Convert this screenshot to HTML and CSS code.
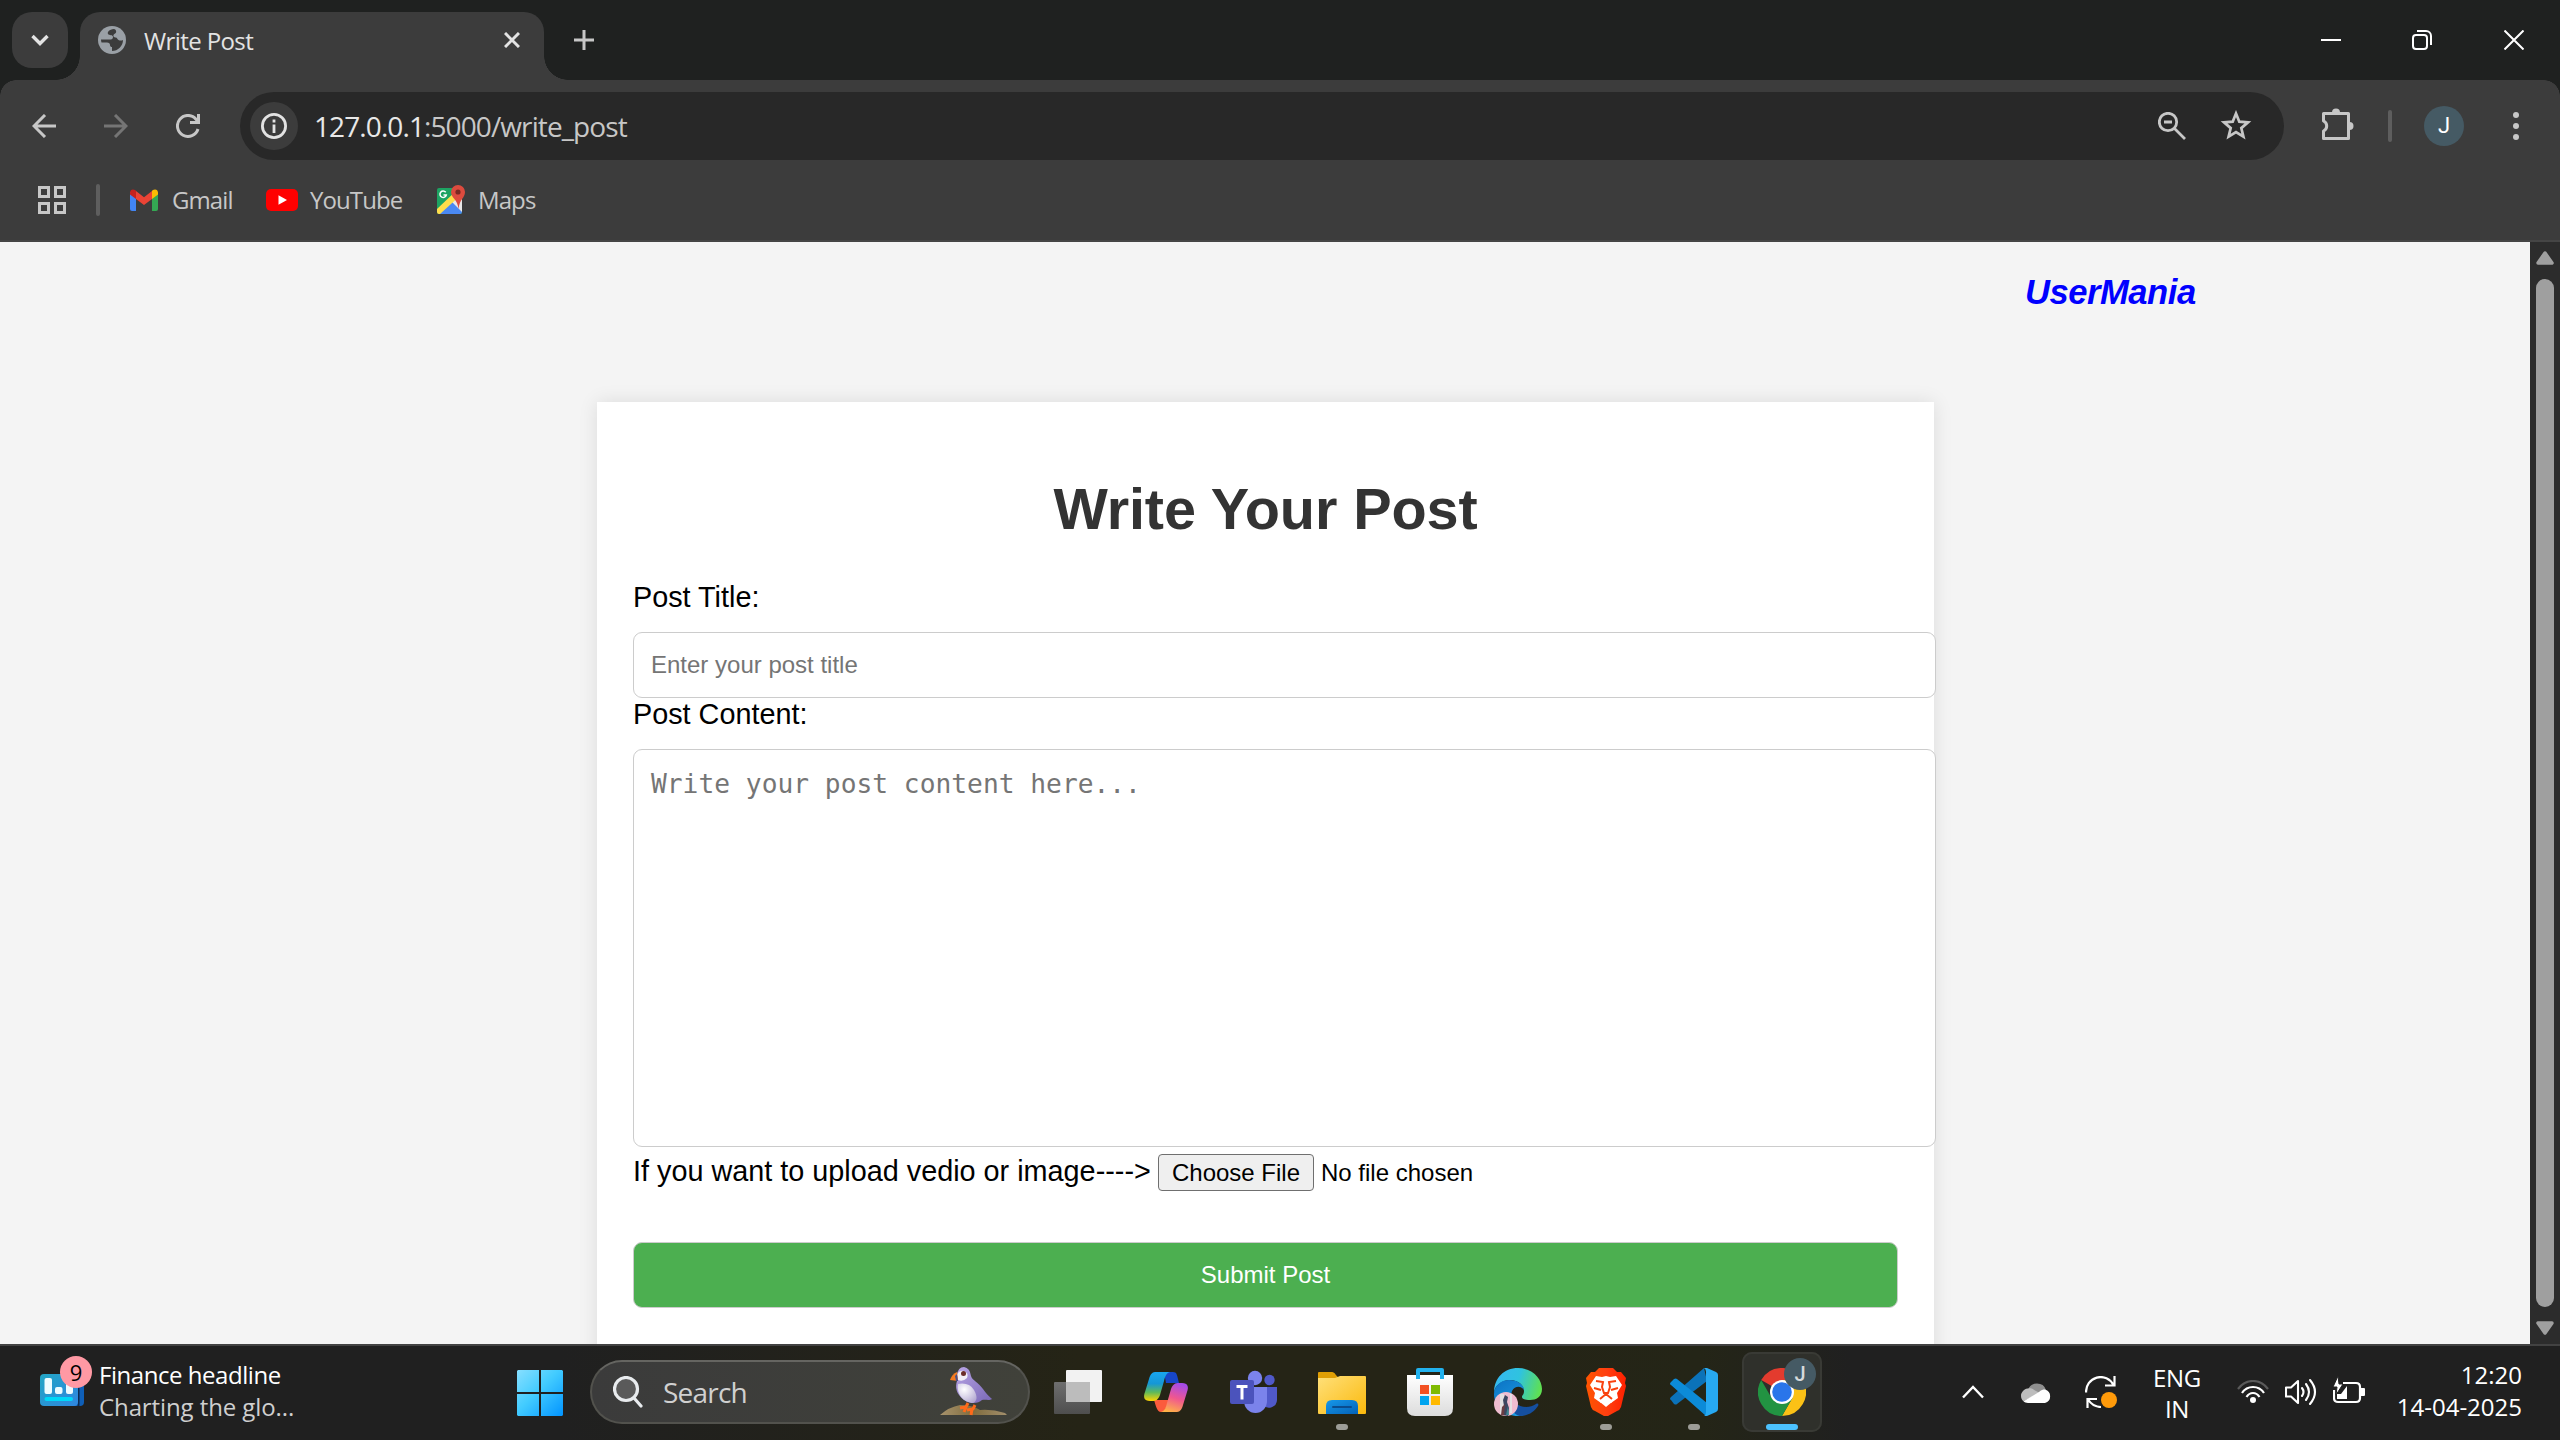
FILE: index.html
```html
<!DOCTYPE html>
<html lang="en">
<head>
<meta charset="utf-8">
<title>Write Post</title>
<link rel="stylesheet" href="styles.css">
</head>
<body>
<div class="screen">
  <header class="tabstrip">
    <button class="tab-search" aria-label="Search tabs"><svg width="20" height="12" viewBox="0 0 20 12"><path d="M2.500 2l7.500 7.500L17.500 2" fill="none" stroke="#e3e3e3" stroke-width="3.400"/></svg></button>
    <div class="tab">
      <svg class="globe" width="28" height="28" viewBox="0 0 28 28"><circle cx="14" cy="14" r="14" fill="#9aa0a6"/><path d="M16 3c-5 .5-7 3-6 5 1 1.500 5 .5 5 3 0 2-1.500 2.500-3 2.500H3c0 1 .2 2 .5 3H9c2 0 3 1 3 2.500s1 2 2 2v4c6 0 11-5 11-11-1 .5-3 1-4.500 0-1.500-1-1-2.500-3-2.500-1.500 0-2.500-1-2-2.500.5-1.500 2-1 2.500-2.500C18.500 5 18 3.500 16 3z" fill="#3c3c3c"/></svg>
      <span class="tab-title">Write Post</span>
      <svg class="tab-close" width="16" height="16" viewBox="0 0 16 16"><path d="M1 1l14 14M15 1L1 15" stroke="#e3e3e3" stroke-width="3"/></svg>
    </div>
    <svg class="new-tab" width="20" height="20" viewBox="0 0 20 20"><path d="M10 0v20M0 10h20" stroke="#c7c7c7" stroke-width="3"/></svg>
    <div class="window-buttons">
      <svg width="20" height="20" viewBox="0 0 20 20"><path d="M0 10h20" stroke="#fff" stroke-width="2"/></svg>
      <svg width="20" height="20" viewBox="0 0 20 20" fill="none" stroke="#fff" stroke-width="2"><rect x="1" y="5" width="14" height="14" rx="3"/><path d="M5 1h9a5 5 0 0 1 5 5v9"/></svg>
      <svg width="20" height="20" viewBox="0 0 20 20"><path d="M.5.500l19 19M19.500.500l-19 19" stroke="#fff" stroke-width="2"/></svg>
    </div>
  </header>

  <div class="toolbar">
    <nav class="nav-buttons">
      <svg width="24" height="24" viewBox="0 0 24 24" fill="none" stroke="#c7c7c7" stroke-width="3"><path d="M24 12H2M13 1L2 12l11 11"/></svg>
      <svg width="24" height="24" viewBox="0 0 24 24" fill="none" stroke="#757575" stroke-width="3"><path d="M0 12h22M11 1l11 11-11 11"/></svg>
      <svg width="24" height="24" viewBox="0 0 24 24" fill="none" stroke="#c7c7c7" stroke-width="3"><path d="M22 15A10.500 10.500 0 1 1 20 5.200l2.500 3M22.500 0v8.500H14"/></svg>
    </nav>
    <div class="omnibox">
      <span class="site-info"><svg width="26" height="26" viewBox="0 0 26 26"><circle cx="13" cy="13" r="11.600" fill="none" stroke="#e3e3e3" stroke-width="2.800"/><path d="M13 11.500V20M13 6.500v3" stroke="#e3e3e3" stroke-width="2.800"/></svg></span>
      <span class="url"><b>127.0.0.1</b>:5000/write_post</span>
      <svg class="zoom-icon" width="28" height="28" viewBox="0 0 28 28" fill="none" stroke="#c7c7c7" stroke-width="2.800"><circle cx="10" cy="10" r="8.700"/><path d="M16.500 16.500L27 27M6 10h8"/></svg>
      <svg class="star" width="32" height="30" viewBox="0 0 32 30"><path d="M16 3.500l3.300 8.200 8.700.7-6.700 5.700 2.100 8.500-7.400-4.600-7.400 4.600 2.100-8.500L4 12.400l8.700-.7z" fill="none" stroke="#c7c7c7" stroke-width="2.700"/></svg>
    </div>
    <svg class="puzzle" width="32" height="32" viewBox="0 0 32 32"><path d="M3.500 5.500h23v25h-25V23a5.500 5.500 0 0 0 0-10V5.500z" fill="none" stroke="#c7c7c7" stroke-width="3" stroke-linejoin="round"/><path d="M10 4.500a4 4 0 0 1 8 0zM27.500 14a4 4 0 0 1 0 8z" fill="#c7c7c7"/></svg>
    <i class="divider"></i>
    <span class="avatar">J</span>
    <svg class="menu" width="6" height="28" viewBox="0 0 6 28" fill="#c7c7c7"><circle cx="3" cy="3" r="3"/><circle cx="3" cy="14" r="3"/><circle cx="3" cy="25" r="3"/></svg>
  </div>

  <div class="bookmarks">
    <svg class="apps" width="28" height="28" viewBox="0 0 28 28" fill="none" stroke="#c7c7c7" stroke-width="3"><path d="M1.500 1.500h9v9h-9zM17.500 1.500h9v9h-9zM1.500 17.500h9v9h-9zM17.500 17.500h9v9h-9z"/></svg>
    <i class="divider"></i>
    <a class="bookmark gmail"><svg width="28" height="22" viewBox="0 0 28 22"><path d="M0 3h6v19H2a2 2 0 0 1-2-2z" fill="#4285f4"/><path d="M22 3h6v17a2 2 0 0 1-2 2h-4z" fill="#34a853"/><path d="M6 2l8 6.200L22 2v8l-8 6-8-6z" fill="#ea4335"/><path d="M0 4c0-4 3.500-4.500 6-2.200V10L0 5.500z" fill="#c5221f"/><path d="M28 4c0-4-3.500-4.500-6-2.200V10l6-4.500z" fill="#fbbc04"/></svg><span>Gmail</span></a>
    <a class="bookmark youtube"><svg width="32" height="22" viewBox="0 0 32 22"><rect width="32" height="22" rx="5" fill="#f00"/><path d="M12.500 6.200v9.600l8.500-4.800z" fill="#fff"/></svg><span>YouTube</span></a>
    <a class="bookmark maps"><svg width="30" height="30" viewBox="0 0 30 30"><rect x="1" y="3" width="25" height="26" rx="2" fill="#1da362"/><path d="M1 26L15 13l11 12v2a2 2 0 0 1-2 2H3z" fill="#4a89f3"/><path d="M26 10v17L14 15z" fill="#e8e8e8"/><path d="M1 24L22 4l4 1v4L4 29H3a2 2 0 0 1-2-2z" fill="#ffdd4b"/><path d="M22 0a7 7 0 0 1 7 7c0 6-5.500 7-6.500 17C21.500 14 15 13 15 7a7 7 0 0 1 7-7z" fill="#dc4b3e"/><circle cx="22" cy="7" r="2.600" fill="#7a2822"/><path d="M9.700 7.300A3.200 3.200 0 1 0 10.300 10H7.500" fill="none" stroke="#fff" stroke-width="1.500"/></svg><span>Maps</span></a>
  </div>

  <main class="viewport">
    <div class="page">
      <a class="brand">UserMania</a>
      <form class="card">
        <h1>Write Your Post</h1>
        <label class="first" for="title">Post Title:</label>
        <input class="field" id="title" type="text" placeholder="Enter your post title">
        <label for="content">Post Content:</label>
        <textarea class="field content" id="content" placeholder="Write your post content here..."></textarea>
        <div class="upload"><span class="upload-label">If you want to upload vedio or image----&gt;</span><span class="choose">Choose File</span><span class="no-file">No file chosen</span></div>
        <button class="submit" type="button">Submit Post</button>
      </form>
    </div>
    <div class="scrollbar">
      <svg width="18" height="14" viewBox="0 0 18 14"><path d="M9 2L16 12H2z" fill="#9f9f9f" stroke="#9f9f9f" stroke-width="3.500" stroke-linejoin="round"/></svg>
      <i class="thumb"></i>
      <svg width="18" height="14" viewBox="0 0 18 14"><path d="M9 12L2 2h14z" fill="#9f9f9f" stroke="#9f9f9f" stroke-width="3.500" stroke-linejoin="round"/></svg>
    </div>
  </main>

  <footer class="taskbar">
    <div class="widget">
      <div class="widget-icon">
        <svg width="44" height="32" viewBox="0 0 44 32"><defs><linearGradient id="news" x1="0" y1="0" x2="1" y2="1"><stop offset="0" stop-color="#22a6c4"/><stop offset="1" stop-color="#2f86e0"/></linearGradient></defs><rect x="30" width="14" height="32" rx="4" fill="#0f5fb8"/><path d="M38.500 4v28" stroke="#0b2b50" stroke-width="2"/><rect width="38" height="32" rx="4" fill="url(#news)"/><rect x="4.500" y="4" width="7.500" height="16" rx="2" fill="#eefcff"/><rect x="15" y="13" width="7.500" height="7" rx="2" fill="#eefcff"/><rect x="26" y="8" width="7" height="12" rx="2" fill="#eefcff"/><rect x="4.500" y="23" width="28.500" height="4" rx="2" fill="#00d8f8"/></svg>
        <span class="badge">9</span>
      </div>
      <div class="widget-text"><span class="headline">Finance headline</span><span class="sub">Charting the glo...</span></div>
    </div>

    <svg class="start" width="46" height="46" viewBox="0 0 46 46"><defs><linearGradient id="win" x1="0" y1="0" x2="1" y2="1"><stop offset="0" stop-color="#87dfff"/><stop offset=".45" stop-color="#43ccff"/><stop offset="1" stop-color="#0294ff"/></linearGradient></defs><path d="M1 0h21v22H0V1zM24 0h21l1 1v21H24zM0 24h22v22H1l-1-1zM24 24h22v21l-1 1H24z" fill="url(#win)"/></svg>

    <div class="search">
      <svg width="30" height="32" viewBox="0 0 30 32" fill="none" stroke="#e8ebee" stroke-width="3.200" stroke-linecap="round"><circle cx="13" cy="13" r="11.500" fill="#5a5a5a"/><path d="M21 22l7 8"/></svg>
      <span class="search-text">Search</span>
      <svg class="bird" width="68" height="50" viewBox="0 0 68 50"><defs><linearGradient id="rock" x1="0" y1="0" x2="1" y2="0"><stop offset="0" stop-color="#a8936c"/><stop offset=".5" stop-color="#806c3e"/><stop offset="1" stop-color="#a38f6c"/></linearGradient><linearGradient id="wing" x1="0" y1="0" x2="1" y2="1"><stop offset="0" stop-color="#b9a5e6"/><stop offset="1" stop-color="#7867b5"/></linearGradient><radialGradient id="belly" cx=".35" cy=".3" r=".8"><stop offset="0" stop-color="#fff"/><stop offset="1" stop-color="#b4a9d2"/></radialGradient></defs><path d="M0 48q9-8 20-10 12 0 20 5 12-1 25 3l2 2z" fill="url(#rock)"/><path d="M17 8Q18 0 24 0q6 1 7 9c1 4 8 7 12 13 4 6 7 8 9 10-3 2-7 0-10 1-4 4-12 4-18 0-8-6-9-13-7-19z" fill="url(#wing)"/><path d="M18 17q11-2 16 6c4 7 3 11-1 13-9 0-17-9-15-19z" fill="url(#belly)"/><path d="M17 8q2-5 7-4 5 2 3 7-4 4-9 2z" fill="#f2eef8"/><circle cx="23.500" cy="6.500" r="2.500" fill="#6b2d2b"/><path d="M17 5q-5 2-7 8l8 1z" fill="#f47a20"/><path d="M15 9l1 5h2l-1-7z" fill="#4a4f87"/><path d="M28 36l-2 4-6 1M26 40l-2 5M35 38l-2 4-6 1M32 42l-1 6" fill="none" stroke="#ff6a1a" stroke-width="3"/></svg>
    </div>

    <div class="apps-row">
      <span class="app"><svg width="48" height="48" viewBox="0 0 48 48"><defs><linearGradient id="tv" x1="0" y1="0" x2="0" y2="1"><stop offset="0" stop-color="#6e6e6e"/><stop offset="1" stop-color="#4e4e4e"/></linearGradient></defs><rect x="12" y="2" width="36" height="32" rx="1" fill="#f2f2f2"/><rect y="14" width="36" height="32" rx="1" fill="url(#tv)"/><path d="M12 14h24v20H12z" fill="#bcbcbc"/></svg></span>
      <span class="app"><svg width="48" height="48" viewBox="0 0 48 48"><defs><linearGradient id="cp1" x1="0" y1="0" x2="0" y2="1"><stop offset="0" stop-color="#18a6f0"/><stop offset=".4" stop-color="#1597d6"/><stop offset=".7" stop-color="#5fb95a"/><stop offset="1" stop-color="#ffd400"/></linearGradient><linearGradient id="cp2" x1=".6" y1="0" x2=".3" y2="1"><stop offset="0" stop-color="#a54be8"/><stop offset=".5" stop-color="#f0578f"/><stop offset="1" stop-color="#ffb347"/></linearGradient></defs><path d="M22 4h9c4 0 4 3 6 11l-13 0z" fill="#1746c8"/><path d="M12 32h16l-6 12h-3c-4 0-5-6-7-12z" fill="#fb5b3d"/><path d="M13 4h15c-4 1-5 5-6 9l-4 14c-2 5-4 6-8 6H8c-6 0-7-4-5-9l4-13c1-4 3-7 6-7z" fill="url(#cp1)"/><path d="M35 44H19c4-1 5-5 6-9l4-14c2-5 4-6 8-6h3c6 0 7 4 5 9l-4 13c-1 4-3 7-6 7z" fill="url(#cp2)"/></svg></span>
      <span class="app"><svg width="48" height="48" viewBox="0 0 48 48"><circle cx="25" cy="10" r="7.200" fill="#7b83eb"/><circle cx="39.500" cy="12" r="5.200" fill="#5059c9"/><path d="M31 19h16v13a8 8 0 0 1-14 5z" fill="#5059c9"/><path d="M14 19h23v14a11.500 12 0 0 1-23 0z" fill="#7b83eb"/><rect y="12" width="24" height="24" rx="2" fill="#4b53bc"/><path d="M6.500 18.500h11M12 18.500v13" stroke="#fff" stroke-width="3"/></svg></span>
      <span class="app running"><svg width="48" height="48" viewBox="0 0 48 48"><defs><linearGradient id="fd" x1="0" y1="0" x2="1" y2="1"><stop offset="0" stop-color="#ffe07a"/><stop offset="1" stop-color="#fbb90c"/></linearGradient><linearGradient id="fb" x1="0" y1="0" x2="1" y2="1"><stop offset="0" stop-color="#1698ea"/><stop offset="1" stop-color="#0462b8"/></linearGradient></defs><path d="M0 5q0-1 1-1h13c3 0 4 4 6 5v8H0z" fill="#e09f05"/><path d="M0 10h17l5-2h25q1 0 1 1v36q0 1-1 1H1q-1 0-1-1z" fill="url(#fd)"/><path d="M8 46V38q0-6 6-6h20q6 0 6 6v8z" fill="url(#fb)"/><path d="M15 39h18" stroke="#0a4c8e" stroke-width="2" stroke-linecap="round"/></svg></span>
      <span class="app"><svg width="48" height="48" viewBox="0 0 48 48"><defs><linearGradient id="st" x1="0" y1="0" x2="0" y2="1"><stop offset="0" stop-color="#fff"/><stop offset="1" stop-color="#dcdcdc"/></linearGradient></defs><path d="M1 7h46v33q0 8-8 8H9q-8 0-8-8z" fill="url(#st)"/><path d="M12 11V2h24v9" fill="none" stroke="#22b2ee" stroke-width="4" stroke-linejoin="round"/><path d="M14 17h9v9h-9z" fill="#f25022"/><path d="M25 17h9v9h-9z" fill="#7fba00"/><path d="M14 28h9v9h-9z" fill="#00a4ef"/><path d="M25 28h9v9h-9z" fill="#ffb900"/></svg></span>
      <span class="app"><svg width="48" height="48" viewBox="0 0 48 48"><defs><linearGradient id="e1" x1="0" y1=".3" x2="1" y2=".5"><stop offset="0" stop-color="#35b8f1"/><stop offset=".5" stop-color="#2fc3df"/><stop offset="1" stop-color="#5fe052"/></linearGradient><linearGradient id="e2" x1="0" y1="0" x2=".6" y2="1"><stop offset="0" stop-color="#0c72c4"/><stop offset="1" stop-color="#1b9de2"/></linearGradient></defs><path d="M0 25C0 10 10 0 24 0c15 0 24 11 24 21 0 8-6 11-12 11-5 0-8-1-8-3s2-2 2-6c0-6-6-11-14-11C8 12 0 18 0 25z" fill="url(#e1)"/><path d="M0 26c0-8 7-14 15-14 9 0 15 5 15 10-2-4-9-5-12 1-3 8 4 25 14 23-2 1-5 2-8 2C10 48 0 38 0 26z" fill="url(#e2)"/><path d="M17 27c1 6 7 12 15 12 4 0 7-1 10-3 2-1 3 0 2 2-4 6-10 10-18 10-9-2-13-13-9-21z" fill="#154f9f"/><circle cx="12" cy="36" r="12" fill="#efbcd0"/><path d="M6 26h4v20H6zM16 26h2v19h-2z" fill="#e4e0e2"/><path d="M11 27l3 2-1 5 2 6-1 8-5-1 1-9-1-6z" fill="#3c4661"/><path d="M8 39l3-3-1 11H7z" fill="#6a3c42"/><path d="M14 38l1 9h-3z" fill="#3c8792"/></svg></span>
      <span class="app running"><svg width="48" height="48" viewBox="0 0 48 48"><defs><linearGradient id="br" x1="0" y1="0" x2="1" y2="0"><stop offset="0" stop-color="#ff5500"/><stop offset=".5" stop-color="#ff4010"/><stop offset="1" stop-color="#ff2000"/></linearGradient></defs><path d="M17 0h14l4 4h4l5 6-1 5 1 3-5 21q-1 3-4 4l-9 5h-4l-9-5q-3-1-4-4L4 18l1-3-1-5 5-6h4z" fill="url(#br)"/><path d="M14 8l6 1 4-1 4 1 6-1 6 9-5 8 1 5-7 5-3-3h-4l-3 3-7-5 1-5-5-8z" fill="#fff"/><path d="M14 13l7 1-1 5 2 6h4l2-6-1-5 7-1M12 20l7 2M36 20l-7 2M18 31l6-5 6 5" fill="none" stroke="#f9410d" stroke-width="2"/><path d="M24 30l6 4-6 5-6-5z" fill="#fff"/></svg></span>
      <span class="app running"><svg width="48" height="48" viewBox="0 0 48 48"><path d="M34 0L1 29q-2 2 0 3l3 4q2 1 3 0L37 13z" fill="#0b72b9"/><path d="M36 48L1 17q-2-1 0-3l3-3q2-1 3 0l30 24z" fill="#0c8bd8"/><path d="M34 0h3l9 4q2 1 2 3v34q0 2-2 3l-9 4h-3q2-1 2-4V4q0-3-2-4z" fill="#27a9f2"/></svg></span>
      <span class="app active"><svg width="48" height="48" viewBox="0 0 48 48"><path d="M24 24L3.200 12A24 24 0 0 1 44.800 12z" fill="#e33b2e"/><path d="M24 12H44.800A24 24 0 0 1 24 48L34.400 30z" fill="#fbc116"/><path d="M3.200 12l10.400 18L24 36l10.400-6L24 48A24 24 0 0 1 3.200 12z" fill="#229342"/><circle cx="24" cy="24" r="12" fill="#fff"/><circle cx="24" cy="24" r="9.800" fill="#2a75ea"/></svg><span class="profile">J</span></span>
    </div>

    <div class="tray">
      <svg class="chev" width="22" height="14" viewBox="0 0 22 14"><path d="M1 12.500L11 2l10 10.500" fill="none" stroke="#fff" stroke-width="2.400"/></svg>
      <svg class="cloud" width="32" height="22" viewBox="0 0 32 22"><path d="M7 9a9.500 9.500 0 0 1 18 0l-7 5-8-3z" fill="#8f8f8f"/><path d="M14 9.500C8 4.500 0 9 0 15c0 2 1 4 2.500 5.300L19 12z" fill="#bdbdbd"/><path d="M2.500 20.300L18 11c2-2 4-2.500 6-2.500a7 7 0 0 1 0 13.500H7c-2 0-3.500-.6-4.500-1.700z" fill="#fff"/></svg>
      <svg class="sync" width="32" height="32" viewBox="0 0 32 32"><path d="M1.100 16.500A14.500 14.500 0 0 1 28.500 9M29.500 0v9.500H20M16 31C10 31 6 28 3 23.500M2.500 32v-9H12" fill="none" stroke="#fff" stroke-width="2.200"/><circle cx="24" cy="24" r="8" fill="#ff9a0a"/></svg>
      <div class="lang"><span>ENG</span><span>IN</span></div>
      <svg class="wifi" width="32" height="24" viewBox="0 0 32 24" fill="none" stroke-width="2.200"><path d="M1 9q6-8 15-8t15 8" stroke="#5a5a5a"/><path d="M5 13q4-6 11-6t11 6M9.500 17q2.500-4 6.500-4t6.500 4" stroke="#fff"/><circle cx="16" cy="20" r="3" fill="#fff"/></svg>
      <svg class="sound" width="32" height="28" viewBox="0 0 32 28" fill="none" stroke="#fff" stroke-width="2.100" stroke-linejoin="round" stroke-linecap="round"><path d="M1 9.500v9h5l7 6.500V3L6 9.500zM17 10q3 4 0 8M21 6q6 8 0 16M25 2q10 12 0 24"/></svg>
      <svg class="battery" width="32" height="28" viewBox="0 0 32 28"><path d="M10 7h13q4 0 4 4v11q0 4-4 4H5q-4 0-4-4v-8" fill="none" stroke="#fff" stroke-width="2.200"/><path d="M28 12h3q1 0 1 1v6q0 1-1 1h-3zM4 23v-5l4 0 6-8v13z" fill="#fff"/><path d="M5 0L0 11h4l-1 8 7-11H6z" fill="#fff" stroke="#202020" stroke-width="1"/></svg>
      <div class="clock"><span>12:20</span><span class="date">14-04-2025</span></div>
    </div>
  </footer>
</div>
</body>
</html>
```
FILE: styles.css
```css
* { box-sizing: border-box; }
body { margin: 0; background: #202020; }
svg { display: block; flex: none; }
button { border: 0; padding: 0; }

.screen {
  width: 2560px;
  height: 1440px;
  display: flex;
  flex-direction: column;
  overflow: hidden;
  font-family: "Open Sans", "Noto Sans", sans-serif;
  font-size: 24px;
}

/* Tab strip */
.tabstrip {
  height: 80px;
  flex: none;
  display: flex;
  align-items: flex-start;
  padding: 12px 36px 0 12px;
  background: #1f2120;
}
.tab-search {
  width: 56px;
  height: 56px;
  border-radius: 20px;
  background: #3c3c3c;
  display: flex;
  align-items: center;
  justify-content: center;
}
.tab {
  position: relative;
  width: 464px;
  height: 68px;
  margin-left: 12px;
  padding: 0 24px 12px 18px;
  display: flex;
  align-items: center;
  border-radius: 20px 20px 0 0;
  background: #3c3c3c;
}
.tab::before, .tab::after {
  content: "";
  position: absolute;
  bottom: 0;
  width: 24px;
  height: 24px;
}
.tab::before { left: -24px; background: radial-gradient(circle at 0 0, transparent 23.5px, #3c3c3c 24px); }
.tab::after { right: -24px; background: radial-gradient(circle at 100% 0, transparent 23.5px, #3c3c3c 24px); }
.tab-title { margin-left: 18px; padding-top: 2px; color: #e3e3e3; letter-spacing: -0.6px; line-height: 34px; white-space: nowrap; }
.tab-close { margin-left: auto; }
.new-tab { margin: 18px 0 0 30px; }
.window-buttons { margin: 18px 0 0 auto; display: flex; gap: 72px; }
.window-buttons svg:first-child { margin-right: -1px; }

/* Toolbar */
.toolbar {
  height: 92px;
  flex: none;
  display: flex;
  align-items: center;
  padding: 0 41px 0 32px;
  background: radial-gradient(circle at 16px 16px, #3c3c3c 15.5px, #1f2120 16px) 0 0 / 16px 16px no-repeat,
              radial-gradient(circle at 0 16px, #3c3c3c 15.5px, #1f2120 16px) 100% 0 / 16px 16px no-repeat,
              #3c3c3c;
}
.nav-buttons { display: flex; gap: 48px; width: 208px; }
.omnibox {
  width: 2044px;
  height: 68px;
  display: flex;
  align-items: center;
  padding: 0 32px 0 10px;
  border-radius: 34px;
  background: #282828;
}
.site-info {
  width: 48px;
  height: 48px;
  border-radius: 50%;
  background: #3c3c3c;
  display: flex;
  align-items: center;
  justify-content: center;
}
.url { margin-left: 16px; padding-bottom: 1px; font-size: 28px; line-height: 40px; letter-spacing: -0.9px; color: #c7c7c7; white-space: nowrap; }
.url b { font-weight: 400; color: #e8e8e8; }
.zoom-icon { margin-left: auto; }
.star { margin-left: 34px; margin-bottom: 2px; }
.puzzle { margin-left: 38px; margin-bottom: 4px; }
.divider { flex: none; width: 4px; height: 32px; border-radius: 2px; background: #5e5e5e; }
.toolbar .divider { margin-left: 34px; }
.avatar {
  width: 40px;
  height: 40px;
  margin-left: 32px;
  border-radius: 50%;
  background: #455a64;
  color: #fff;
  font: 22px/40px Roboto, sans-serif;
  text-align: center;
}
.menu { margin-left: auto; }

/* Bookmarks bar */
.bookmarks {
  height: 70px;
  flex: none;
  display: flex;
  align-items: center;
  padding: 0 0 12px 38px;
  background: #3c3c3c;
  border-bottom: 2px solid #454545;
  color: #c7c7c7;
}
.bookmarks .divider { margin-left: 30px; }
.bookmark { display: flex; align-items: center; white-space: nowrap; line-height: 34px; letter-spacing: -0.9px; }
.bookmark span { padding-bottom: 1px; }
.gmail { margin-left: 30px; gap: 14px; width: 136px; }
.youtube { gap: 12px; width: 170px; }
.maps { gap: 12px; }

/* Web page */
.viewport { height: 1102px; flex: none; display: flex; overflow: hidden; }
.page {
  flex: 1;
  display: flex;
  flex-direction: column;
  padding: 30px 0 0 597px;
  background: #f4f4f4;
  font-family: Arial, "Liberation Sans", sans-serif;
  font-size: 28.8px;
  color: #000;
}
.brand {
  flex: none;
  height: 130px;
  margin-left: 1428px;
  font-size: 34.56px;
  font-weight: bold;
  font-style: italic;
  line-height: 40px;
  letter-spacing: -0.45px;
  color: #00f;
}
.card {
  width: 1337px;
  height: 1000px;
  flex: none;
  display: flex;
  flex-direction: column;
  align-items: flex-start;
  padding: 36px;
  background: #fff;
  box-shadow: 0 0 18px rgba(0, 0, 0, 0.1);
}
.card h1 {
  width: 100%;
  margin: 38px 0;
  font-size: 57.6px;
  line-height: 66px;
  letter-spacing: -0.1px;
  text-align: center;
  color: #333;
}
.card label { line-height: 33px; margin-bottom: 18px; }
.card .first { margin-top: 1px; }
.field {
  display: block;
  flex: none;
  width: 1303px;
  height: 66px;
  padding: 17px;
  border: 1px solid #ccc;
  border-radius: 9px;
  outline: 0;
  background: #fff;
  font: 24px/28px Arial, "Liberation Sans", sans-serif;
}
.field::placeholder { color: #757575; opacity: 1; }
.content { height: 398px; padding-top: 18px; resize: none; font: 26.25px/33px "DejaVu Sans Mono", monospace; }
.upload { display: flex; align-items: center; margin-top: 7px; height: 37px; white-space: nowrap; }
.upload-label { width: 525px; line-height: 33px; padding-bottom: 2px; }
.choose {
  width: 156px;
  height: 37px;
  border: 1px solid #6f6f6f;
  border-radius: 4px;
  background: #efefef;
  font-size: 24px;
  line-height: 36px;
  text-align: center;
}
.no-file { margin-left: 7px; font-size: 24px; line-height: 36px; }
.submit {
  width: 1265px;
  height: 66px;
  flex: none;
  margin-top: 51px;
  border: 1px solid #ccc;
  border-radius: 9px;
  background: #4caf50;
  color: #fff;
  font: 24px/28px Arial, "Liberation Sans", sans-serif;
}

.scrollbar {
  width: 30px;
  display: flex;
  flex-direction: column;
  align-items: center;
  padding: 9px 0;
  gap: 14px;
  background: #2c2c2c;
}
.thumb { width: 18px; flex: 1; border-radius: 9px; background: #9f9f9f; }

/* Taskbar */
.taskbar {
  height: 96px;
  flex: none;
  display: flex;
  align-items: flex-start;
  border-top: 2px solid #424242;
  background: linear-gradient(90deg, #202020 0, #202020 560px, #252416 1080px, #252416 1480px, #242517 1700px, #202020 1850px);
  color: #fff;
}
.widget { display: flex; width: 517px; padding-left: 40px; }
.widget-icon { position: relative; width: 44px; padding-top: 28px; }
.badge {
  position: absolute;
  left: 20px;
  top: 10px;
  width: 32px;
  height: 32px;
  border-radius: 50%;
  background: #ff99a4;
  color: #000;
  font-size: 22px;
  line-height: 32px;
  text-align: center;
}
.widget-text { display: flex; flex-direction: column; margin: 13px 0 0 15px; line-height: 32px; white-space: nowrap; }
.headline { letter-spacing: -0.45px; }
.sub { color: #cfcfcf; letter-spacing: -0.1px; }
.start { margin-top: 24px; }
.search {
  width: 440px;
  height: 64px;
  margin: 14px 0 0 27px;
  padding: 0 22px 0 21px;
  display: flex;
  align-items: center;
  border: 2px solid #52524d;
  border-top-color: #656561;
  border-radius: 32px;
  background: linear-gradient(90deg, #3b3b3b, #40413a);
}
.search-text { margin-left: 20px; font-size: 28px; line-height: 38px; letter-spacing: -0.8px; color: #d0d0d0; }
.bird { margin-left: auto; margin-right: -2px; }
.apps-row { display: flex; gap: 8px; margin: 6px 0 0 8px; }
.app {
  position: relative;
  width: 80px;
  height: 80px;
  padding: 16px;
}
.running::after, .active::after {
  content: "";
  position: absolute;
  left: 34px;
  bottom: 2px;
  width: 12px;
  height: 6px;
  border-radius: 3px;
  background: #9d9d97;
}
.active { border-radius: 10px; background: #2f302b; box-shadow: inset 0 0 0 2px #393a35; }
.active::after { left: 24px; width: 32px; background: #4cc2ff; }
.profile {
  position: absolute;
  left: 42px;
  top: 6px;
  width: 32px;
  height: 32px;
  border-radius: 50%;
  background: #455a64;
  color: #d5dadd;
  font: 500 20px/32px Roboto, sans-serif;
  text-align: center;
}
.tray { display: flex; align-items: flex-start; flex: 1; padding-left: 140px; }
.chev { margin-top: 39px; }
.cloud { margin: 35px 0 0 37px; }
.sync { margin: 30px 0 0 32px; }
.lang { width: 64px; margin: 16px 0 0 28px; display: flex; flex-direction: column; align-items: center; line-height: 31px; letter-spacing: -0.3px; }
.wifi { margin: 34px 0 0 28px; }
.sound { margin: 32px 0 0 16px; }
.battery { margin: 30px 0 0 16px; }
.clock { margin: 13px 38px 0 auto; display: flex; flex-direction: column; align-items: flex-end; line-height: 32px; }
```
